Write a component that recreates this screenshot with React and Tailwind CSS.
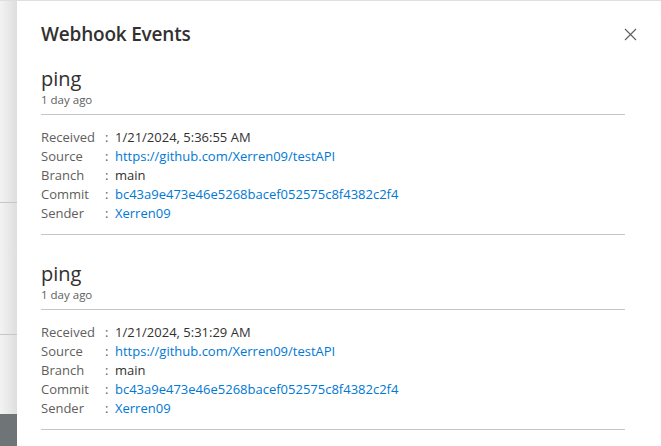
import React from "react";

const events = [
  { time: "1/21/2024, 5:36:55 AM" },
  { time: "1/21/2024, 5:31:29 AM" },
];

function Row({ label, value, link }) {
  return (
    <div className="flex h-[19px] items-center">
      <span className="w-[64px] text-[#605e5c]">{label}</span>
      <span className="w-[10px] text-[#605e5c]">:</span>
      <span className={link ? "text-[#0078d4]" : "text-[#323130]"}>{value}</span>
    </div>
  );
}

function Event({ time, first }) {
  return (
    <div className={first ? "mt-[18px]" : "mt-[26px]"}>
      <div className="text-[20px] leading-[26px] text-[#323130]">ping</div>
      <div className="text-[11.5px] leading-[16px] text-[#605e5c]">1 day ago</div>
      <div className="mt-[6px] h-px bg-[#c8c6c4]" />
      <div className="mt-[13px] text-[13px]">
        <Row label="Received" value={time} />
        <Row label="Source" value="https://github.com/Xerren09/testAPI" link />
        <Row label="Branch" value="main" />
        <Row label="Commit" value="bc43a9e473e46e5268bacef052575c8f4382c2f4" link />
        <Row label="Sender" value="Xerren09" link />
      </div>
      <div className="mt-[11px] h-px bg-[#c8c6c4]" />
    </div>
  );
}

export default function App() {
  return (
    <div
      className="relative w-[661px] h-[446px] overflow-hidden bg-white flex"
      style={{ fontFamily: '"Open Sans", "Noto Sans", sans-serif' }}
    >
      <div className="absolute left-0 right-0 top-0 h-px bg-[#e1dfdd] z-10" />
      <div className="w-[17px] shrink-0 flex flex-col bg-gradient-to-r from-[#f3f3f3] to-[#dedede]">
        <div className="h-[202px]" />
        <div className="h-px bg-[#c6c6c6]" />
        <div className="h-[131px]" />
        <div className="h-px bg-[#c6c6c6]" />
        <div className="flex-1" />
        <div className="h-[32px] bg-[#6f7476]" />
      </div>
      <div className="flex-1 pl-[24px] pr-[36px]">
        <div className="flex items-center justify-between h-[28px] mt-[20px]">
          <div className="text-[19px] font-semibold text-[#323130] tracking-[-0.2px]">Webhook Events</div>
          <svg width="13" height="13" viewBox="0 0 13 13" className="mr-[-12px]">
            <path d="M1 1 L12 12 M12 1 L1 12" stroke="#605e5c" strokeWidth="1.1" />
          </svg>
        </div>
        {events.map((e, i) => (
          <Event key={i} time={e.time} first={i === 0} />
        ))}
      </div>
    </div>
  );
}
